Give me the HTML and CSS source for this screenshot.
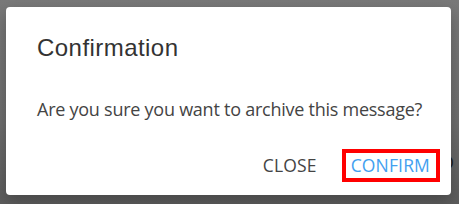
FILE: index.html
```html
<!DOCTYPE html>
<html>
<head>
<meta charset="utf-8">
<link rel="stylesheet" href="styles.css">
</head>
<body>
<div class="backdrop">
  <span class="behind">O</span>
  <div class="dialog">
    <h2 class="title">Confirmation</h2>
    <p class="message">Are you sure you want to archive this message?</p>
    <div class="actions">
      <button class="btn btn-close">CLOSE</button>
      <button class="btn btn-confirm">CONFIRM</button>
    </div>
  </div>
</div>
</body>
</html>
```
FILE: styles.css
```css
html, body {
  margin: 0;
  padding: 0;
  width: 459px;
  height: 204px;
  overflow: hidden;
}
.backdrop {
  position: relative;
  box-sizing: border-box;
  width: 459px;
  height: 204px;
  padding: 7px 8px 9px 6px;
  background: linear-gradient(#797979, #6e6e6e 60%, #5c5c5c);
}
.behind {
  position: absolute;
  left: 440px;
  top: 150px;
  font-family: "Open Sans", sans-serif;
  font-size: 18px;
  color: #1e1e1e;
}
.dialog {
  position: relative;
  box-sizing: border-box;
  height: 188px;
  background: #fff;
  border-radius: 4px;
  box-shadow: 0 6px 16px rgba(0,0,0,0.25);
  display: flex;
  flex-direction: column;
}
.title {
  margin: 0;
  padding: 27px 0 0 31px;
  font-family: "Liberation Sans", Arial, sans-serif;
  font-weight: normal;
  font-size: 24px;
  letter-spacing: 0.45px;
  line-height: 28px;
  color: #333;
}
.message {
  margin: 0;
  padding: 35px 0 0 31px;
  font-family: "Open Sans", sans-serif;
  font-size: 18px;
  letter-spacing: -0.25px;
  line-height: 24px;
  color: #444;
}
.actions {
  display: flex;
  justify-content: flex-end;
  align-items: center;
  gap: 15px;
  margin-top: auto;
  padding: 0 11px 13px 0;
}
.btn {
  font-family: "Open Sans", sans-serif;
  font-size: 17.5px;
  letter-spacing: 0.15px;
  background: transparent;
  border: 4px solid transparent;
  padding: 0 6px 1px 5px;
  line-height: 24px;
  cursor: pointer;
}
.btn-close {
  color: #444;
}
.btn-confirm {
  color: #42a0f0;
  border-color: #ff0000;
}
```
